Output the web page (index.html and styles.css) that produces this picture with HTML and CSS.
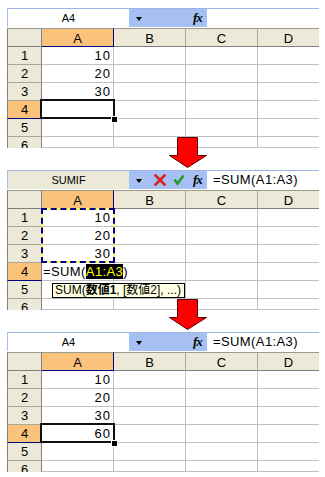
FILE: index.html
```html
<!DOCTYPE html>
<html>
<head>
<meta charset="utf-8">
<link rel="stylesheet" href="styles.css">
</head>
<body>
<div class="page">

  <section class="sheet">
    <div class="fbar">
      <div class="namebox">A4</div>
      <div class="fbtns"><span class="drop"></span><span class="fx">fx</span></div>
      <div class="formula"></div>
    </div>
    <div class="grid">
      <div class="corner"></div><div class="ch sel">A</div><div class="ch">B</div><div class="ch">C</div><div class="ch last">D</div>
      <div class="rh">1</div><div class="c num">10</div><div class="c"></div><div class="c"></div><div class="c last"></div>
      <div class="rh">2</div><div class="c num">20</div><div class="c"></div><div class="c"></div><div class="c last"></div>
      <div class="rh">3</div><div class="c num">30</div><div class="c"></div><div class="c"></div><div class="c last"></div>
      <div class="rh sel">4</div><div class="c active"></div><div class="c"></div><div class="c"></div><div class="c last"></div>
      <div class="rh">5</div><div class="c"></div><div class="c"></div><div class="c"></div><div class="c last"></div>
      <div class="rh cut">6</div><div class="c"></div><div class="c"></div><div class="c"></div><div class="c last"></div>
    </div>
  </section>

  <div class="join">
    <svg class="arrow" width="38" height="31" viewBox="0 0 38 31"><path d="M8.5 0.5H28.5V18.5H37.5L18.5 30.5L0.5 18.5H8.5Z" fill="#ff0000" stroke="#5a0000" stroke-width="1"/></svg>
  </div>

  <section class="sheet">
    <div class="fbar">
      <div class="namebox edit">SUMIF</div>
      <div class="fbtns">
        <span class="drop"></span>
        <svg class="xmark" width="12" height="12" viewBox="0 0 12 12"><path d="M1.5 1.5L10.5 10.5M10.5 1.5L1.5 10.5" stroke="#dc2020" stroke-width="2.6" stroke-linecap="square"/></svg>
        <svg class="check" width="12" height="12" viewBox="0 0 12 12"><path d="M1.5 5.5L4.5 9.5L10.5 1.5" fill="none" stroke="#1f9a2a" stroke-width="2.6"/></svg>
        <span class="fx">fx</span>
      </div>
      <div class="formula">=SUM(A1:A3)</div>
    </div>
    <div class="grid">
      <div class="corner"></div><div class="ch sel">A</div><div class="ch">B</div><div class="ch">C</div><div class="ch last">D</div>
      <div class="rh">1</div><div class="c num">10</div><div class="c"></div><div class="c"></div><div class="c last"></div>
      <div class="rh">2</div><div class="c num">20</div><div class="c"></div><div class="c"></div><div class="c last"></div>
      <div class="rh">3</div><div class="c num">30</div><div class="c"></div><div class="c"></div><div class="c last"></div>
      <div class="rh sel">4</div><div class="c editing"><span class="etext">=SUM(<span class="hl">A1:A3</span>)</span></div><div class="c"></div><div class="c"></div><div class="c last"></div>
      <div class="rh">5</div><div class="c"></div><div class="c"></div><div class="c"></div><div class="c last"></div>
      <div class="rh cut">6</div><div class="c"></div><div class="c"></div><div class="c"></div><div class="c last"></div>
    </div>
    <div class="marquee"></div>
    <div class="tip">SUM(<b>数値1</b>, [数値2], ...)</div>
  </section>

  <div class="join">
    <svg class="arrow" width="38" height="31" viewBox="0 0 38 31"><path d="M8.5 0.5H28.5V18.5H37.5L18.5 30.5L0.5 18.5H8.5Z" fill="#ff0000" stroke="#5a0000" stroke-width="1"/></svg>
  </div>

  <section class="sheet">
    <div class="fbar">
      <div class="namebox">A4</div>
      <div class="fbtns"><span class="drop"></span><span class="fx">fx</span></div>
      <div class="formula">=SUM(A1:A3)</div>
    </div>
    <div class="grid">
      <div class="corner"></div><div class="ch sel">A</div><div class="ch">B</div><div class="ch">C</div><div class="ch last">D</div>
      <div class="rh">1</div><div class="c num">10</div><div class="c"></div><div class="c"></div><div class="c last"></div>
      <div class="rh">2</div><div class="c num">20</div><div class="c"></div><div class="c"></div><div class="c last"></div>
      <div class="rh">3</div><div class="c num">30</div><div class="c"></div><div class="c"></div><div class="c last"></div>
      <div class="rh sel">4</div><div class="c num active">60</div><div class="c"></div><div class="c"></div><div class="c last"></div>
      <div class="rh">5</div><div class="c"></div><div class="c"></div><div class="c"></div><div class="c last"></div>
      <div class="rh cut">6</div><div class="c"></div><div class="c"></div><div class="c"></div><div class="c last"></div>
    </div>
  </section>

</div>
</body>
</html>
```

FILE: styles.css
```css
* { box-sizing: border-box; margin: 0; padding: 0; }
html, body { background: #fff; }
body {
  width: 325px;
  height: 477px;
  overflow: hidden;
  font-family: "Liberation Sans", "Noto Sans CJK JP", Arial, sans-serif;
  color: #000;
}
.page {
  display: flex;
  flex-direction: column;
  padding: 8px 0 0 7px;
}
.sheet {
  position: relative;
  width: 312px;
  height: 140px;
  overflow: hidden;
  background: #fff;
}
.join {
  position: relative;
  height: 22px;
  z-index: 2;
}
.arrow {
  position: absolute;
  left: 162px;
  top: -11px;
}

/* formula bar */
.fbar {
  display: grid;
  grid-template-columns: 121px 78px 1fr;
  height: 19px;
  border-top: 1px solid #9db5e6;
  border-left: 1px solid #a8bfee;
}
.namebox {
  background: #fff;
  font-size: 11px;
  line-height: 18px;
  text-align: center;
}
.namebox.edit { background: #ece9d8; }
.fbtns {
  position: relative;
  background: #a7c0f3;
}
.drop {
  position: absolute;
  left: 7px;
  top: 8px;
  width: 0;
  height: 0;
  border-left: 3.5px solid transparent;
  border-right: 3.5px solid transparent;
  border-top: 4px solid #000;
}
.xmark { position: absolute; left: 25px; top: 3px; }
.check { position: absolute; left: 44px; top: 3px; }
.fx {
  position: absolute;
  left: 64px;
  top: 1px;
  font-family: "Liberation Serif", serif;
  font-style: italic;
  font-weight: bold;
  font-size: 13px;
  letter-spacing: -1px;
  line-height: 16px;
}
.formula {
  background: #fff;
  padding-left: 6px;
  font-size: 13px;
  letter-spacing: 0.4px;
  line-height: 18px;
}

/* grid */
.grid {
  display: grid;
  grid-template-columns: 35px 72px 72px 72px 61px;
  grid-template-rows: 19px repeat(5, 18px) 11px;
  margin-top: 1px;
}
.corner, .ch, .rh {
  background: #ece9d8;
}
.corner {
  border-top: 1px solid #9c9a8c;
  border-left: 1px solid #808080;
  border-right: 1px solid #808080;
  border-bottom: 1px solid #808080;
}
.ch {
  border-top: 1px solid #9c9a8c;
  border-right: 1px solid #aca899;
  border-bottom: 1px solid #808080;
  font-size: 13px;
  text-align: center;
  line-height: 19px;
}
.ch.last { border-right: none; }
.rh {
  border-left: 1px solid #808080;
  border-right: 1px solid #808080;
  border-bottom: 1px solid #aca899;
  font-size: 13px;
  text-align: center;
  line-height: 18px;
}
.rh.cut { border-bottom: none; }
.ch.sel, .rh.sel { background: #fbc27b; }
.ch.sel { border-right-color: #000080; border-bottom-color: #000080; }
.rh.sel { border-bottom-color: #000080; }

.c {
  position: relative;
  border-right: 1px solid #c0c0c0;
  border-bottom: 1px solid #c0c0c0;
  font-size: 13px;
  line-height: 18px;
}
.c.last { border-right: none; }
.num {
  text-align: right;
  padding-right: 2px;
  letter-spacing: 1px;
}
.active::after {
  content: "";
  position: absolute;
  left: -2px;
  top: -2px;
  right: -2px;
  bottom: -1px;
  border: 2px solid #101010;
}
.active::before {
  content: "";
  position: absolute;
  right: -4px;
  bottom: -4px;
  width: 5px;
  height: 5px;
  background: #000;
  box-shadow: 0 0 0 1px #fff;
  z-index: 1;
}
.editing {
  z-index: 1;
  overflow: visible;
  white-space: nowrap;
}
.etext {
  position: relative;
  padding-left: 1px;
  letter-spacing: 0.4px;
  background: #fff;
}
.hl {
  background: #000;
  color: #ffff00;
}

/* copy marquee on A1:A3 */
.marquee {
  position: absolute;
  left: 34px;
  top: 38px;
  width: 74px;
  height: 55px;
  border: 2px solid #ffff60;
}
.marquee::after {
  content: "";
  position: absolute;
  inset: -2px;
  border: 2px dashed #000080;
}

/* tooltip */
.tip {
  position: absolute;
  left: 45px;
  top: 113px;
  width: 133px;
  height: 15px;
  background: #ffffe1;
  border: 1px solid #000;
  font-size: 12px;
  line-height: 13px;
  padding-left: 2px;
  white-space: nowrap;
}
.tip b { font-weight: bold; }
```
